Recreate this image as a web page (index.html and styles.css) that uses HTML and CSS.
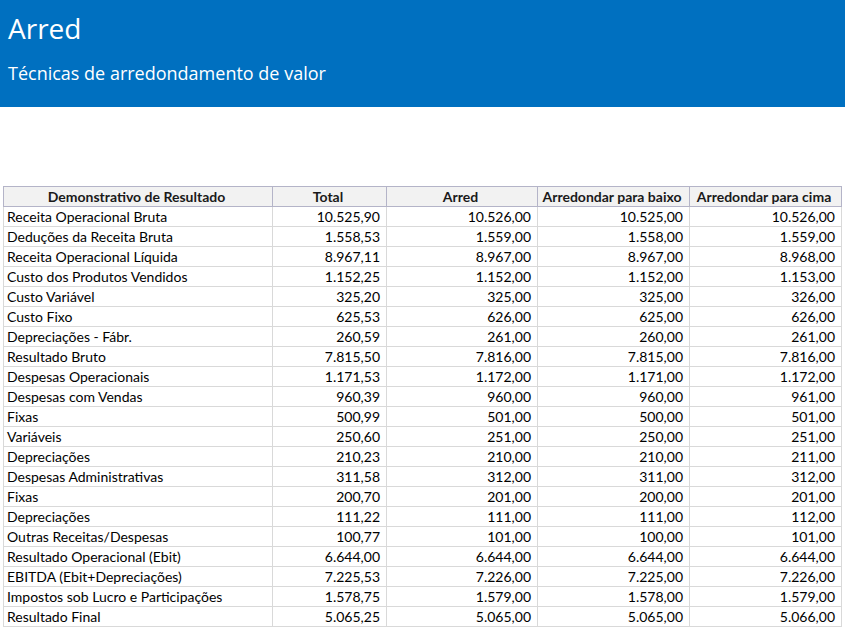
FILE: index.html
```html
<!DOCTYPE html>
<html lang="pt">
<head>
<meta charset="utf-8">
<title>Arred</title>
<link rel="stylesheet" href="styles.css">
</head>
<body>
<header class="banner">
  <h1 class="title">Arred</h1>
  <p class="subtitle">Técnicas de arredondamento de valor</p>
</header>
<main class="content">
  <table class="grid">
    <colgroup>
      <col class="c1"><col class="c2"><col class="c3"><col class="c4"><col class="c5">
    </colgroup>
    <thead>
      <tr>
        <th>Demonstrativo de Resultado</th>
        <th>Total</th>
        <th>Arred</th>
        <th>Arredondar para baixo</th>
        <th>Arredondar para cima</th>
      </tr>
    </thead>
    <tbody>
      <tr><td>Receita Operacional Bruta</td><td>10.525,90</td><td>10.526,00</td><td>10.525,00</td><td>10.526,00</td></tr>
      <tr><td>Deduções da Receita Bruta</td><td>1.558,53</td><td>1.559,00</td><td>1.558,00</td><td>1.559,00</td></tr>
      <tr><td>Receita Operacional Líquida</td><td>8.967,11</td><td>8.967,00</td><td>8.967,00</td><td>8.968,00</td></tr>
      <tr><td>Custo dos Produtos Vendidos</td><td>1.152,25</td><td>1.152,00</td><td>1.152,00</td><td>1.153,00</td></tr>
      <tr><td>Custo Variável</td><td>325,20</td><td>325,00</td><td>325,00</td><td>326,00</td></tr>
      <tr><td>Custo Fixo</td><td>625,53</td><td>626,00</td><td>625,00</td><td>626,00</td></tr>
      <tr><td>Depreciações - Fábr.</td><td>260,59</td><td>261,00</td><td>260,00</td><td>261,00</td></tr>
      <tr><td>Resultado Bruto</td><td>7.815,50</td><td>7.816,00</td><td>7.815,00</td><td>7.816,00</td></tr>
      <tr><td>Despesas Operacionais</td><td>1.171,53</td><td>1.172,00</td><td>1.171,00</td><td>1.172,00</td></tr>
      <tr><td>Despesas com Vendas</td><td>960,39</td><td>960,00</td><td>960,00</td><td>961,00</td></tr>
      <tr><td>Fixas</td><td>500,99</td><td>501,00</td><td>500,00</td><td>501,00</td></tr>
      <tr><td>Variáveis</td><td>250,60</td><td>251,00</td><td>250,00</td><td>251,00</td></tr>
      <tr><td>Depreciações</td><td>210,23</td><td>210,00</td><td>210,00</td><td>211,00</td></tr>
      <tr><td>Despesas Administrativas</td><td>311,58</td><td>312,00</td><td>311,00</td><td>312,00</td></tr>
      <tr><td>Fixas</td><td>200,70</td><td>201,00</td><td>200,00</td><td>201,00</td></tr>
      <tr><td>Depreciações</td><td>111,22</td><td>111,00</td><td>111,00</td><td>112,00</td></tr>
      <tr><td>Outras Receitas/Despesas</td><td>100,77</td><td>101,00</td><td>100,00</td><td>101,00</td></tr>
      <tr><td>Resultado Operacional (Ebit)</td><td>6.644,00</td><td>6.644,00</td><td>6.644,00</td><td>6.644,00</td></tr>
      <tr><td>EBITDA (Ebit+Depreciações)</td><td>7.225,53</td><td>7.226,00</td><td>7.225,00</td><td>7.226,00</td></tr>
      <tr><td>Impostos sob Lucro e Participações</td><td>1.578,75</td><td>1.579,00</td><td>1.578,00</td><td>1.579,00</td></tr>
      <tr><td>Resultado Final</td><td>5.065,25</td><td>5.065,00</td><td>5.065,00</td><td>5.066,00</td></tr>
    </tbody>
  </table>
</main>
</body>
</html>
```
FILE: styles.css
```css
html, body {
  margin: 0;
  padding: 0;
  background: #ffffff;
}

body {
  font-family: "Open Sans", "Noto Sans", sans-serif;
  color: #000000;
}

.banner {
  background: #0070c0;
  color: #ffffff;
  height: 107px;
  padding: 10px 0 0 8px;
  box-sizing: border-box;
}

.title {
  margin: 0;
  font-weight: 400;
  font-size: 28px;
  line-height: 36px;
}

.subtitle {
  margin: 16px 0 0 0;
  font-size: 18px;
  line-height: 23px;
  font-weight: 400;
}

.content {
  padding: 79px 0 0 3px;
}

.grid {
  border-collapse: collapse;
  table-layout: fixed;
  width: 838px;
  font-family: "Lato", "Open Sans", sans-serif;
  font-size: 14px;
}

.c1 { width: 269px; }
.c2 { width: 114px; }
.c3 { width: 151px; }
.c4 { width: 152px; }
.c5 { width: 152px; }

.grid th,
.grid td {
  height: 19px;
  padding: 0 6px 0 3px;
  line-height: 19px;
  white-space: nowrap;
  overflow: hidden;
  box-sizing: border-box;
}

.grid th {
  background: #f2f2f2;
  border: 1px solid #b4b4c8;
  font-weight: 700;
  text-align: center;
  color: #1a1a1a;
}

.grid td {
  border: 1px solid #d9d9d9;
  text-align: right;
}

.grid td:first-child {
  text-align: left;
}
```
